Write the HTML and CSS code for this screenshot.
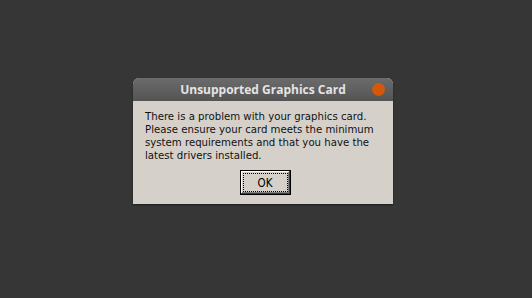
FILE: index.html
```html
<!DOCTYPE html>
<html lang="en">
<head>
    <meta charset="UTF-8">
    <title>Unsupported Graphics Card</title>
    <link rel="stylesheet" href="styles.css">
</head>
<body>
    <div class="screen">
        <div class="dialog">
            <div class="titlebar">
                <span class="title">Unsupported Graphics Card</span>
                <span class="close"></span>
            </div>
            <div class="content">
                <p class="message">There is a problem with your graphics card.<br>Please ensure your card meets the minimum system requirements and that you have the latest drivers installed.</p>
                <div class="actions">
                    <button class="ok"><span class="focus">OK</span></button>
                </div>
            </div>
        </div>
    </div>
</body>
</html>
```

FILE: styles.css
```css
html, body {
    margin: 0;
    height: 100%;
    background: #363636;
}
.screen {
    height: 100%;
    display: flex;
    align-items: center;
    justify-content: center;
}
.dialog {
    width: 260px;
    margin: 0 6px 16px 0;
    border-radius: 6px 6px 0 0;
    background: #d5d1ca;
    box-shadow: 0 1px 2px rgba(0,0,0,0.45);
    overflow: hidden;
}
.titlebar {
    height: 23px;
    position: relative;
    display: flex;
    align-items: center;
    justify-content: center;
    background: linear-gradient(#6b6b6b, #545454);
}
.title {
    font-family: "Open Sans", sans-serif;
    font-weight: bold;
    font-size: 12px;
    color: #e4e4e4;
}
.close {
    position: absolute;
    right: 8px;
    top: 5px;
    width: 13px;
    height: 13px;
    border-radius: 50%;
    background: #d4570a;
}
.content {
    padding: 9px 8px 9px 12px;
}
.message {
    margin: 0;
    font-family: "DejaVu Sans Condensed", "DejaVu Sans", sans-serif;
    font-stretch: condensed;
    font-size: 11.3px;
    line-height: 13px;
    color: #111;
}
.actions {
    display: flex;
    justify-content: center;
    margin-top: 8px;
}
.ok {
    width: 51px;
    height: 25px;
    padding: 2px;
    border: 1px solid #000;
    background: #d5d1ca;
    box-shadow: inset -1px -1px 0 #404040, inset 1px 1px 0 #fff, inset -2px -2px 0 #808080;
    font-family: "DejaVu Sans Condensed", "DejaVu Sans", sans-serif;
    font-stretch: condensed;
    font-size: 11.5px;
    color: #000;
}
.focus {
    display: flex;
    align-items: center;
    justify-content: center;
    height: 100%;
    border: 1px dotted #000;
    box-sizing: border-box;
}
```
